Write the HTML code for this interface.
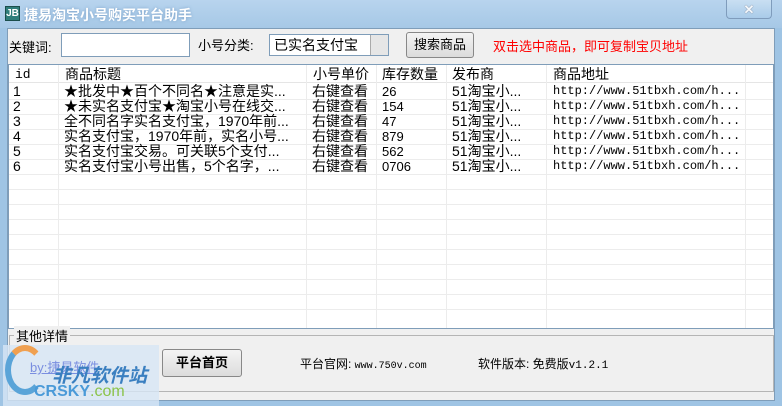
<!DOCTYPE html>
<html><head><meta charset="utf-8"><style>
*{margin:0;padding:0;box-sizing:border-box}
body{width:782px;height:406px;overflow:hidden;background:#9fc4e4;font-family:"Liberation Sans","Noto Sans CJK SC",sans-serif;position:relative}
.a{position:absolute;white-space:nowrap}
#client{left:7px;top:28px;width:768px;height:373px;background:#f0f0f0;border:1px solid #7f9db9}
.cell{position:absolute;font-size:14px;line-height:15px;color:#000;overflow:hidden;white-space:nowrap}
.mono{font-family:"Liberation Mono","Noto Sans CJK SC",monospace;font-size:12px}
.vl{position:absolute;top:0;width:1px;height:263px;background:#ececec}
.hl{position:absolute;left:0;width:764px;height:1px;background:#ececec}
</style></head><body>
<div class="a" style="left:0;top:0;width:782px;height:28px;background:linear-gradient(#b8d4ee,#a6c8e6)"></div>
<div class="a" style="left:5px;top:6px;width:15px;height:15px;background:#2e7d7a;border:1px solid #1b4d4b;color:#fff;font-size:10px;line-height:13px;text-align:center;font-weight:bold">JB</div>
<div class="a" style="left:24px;top:5px;font-size:14px;color:#fff;font-weight:bold;text-shadow:0 0 3px #7aa0c8">捷易淘宝小号购买平台助手</div>
<div class="a" style="left:726px;top:0;width:46px;height:19px;border:1px solid #7f9cbc;border-top:none;border-radius:0 0 4px 4px;background:linear-gradient(#c9dff2,#a9cbe9);color:#f4f8fc;text-align:center;font-size:13px;line-height:19px;font-weight:bold;text-shadow:0 0 1px #556">✕</div>
<div class="a" id="client"></div>
<div class="a" style="left:9px;top:37px;font-size:13px">关键词:</div>
<div class="a" style="left:61px;top:33px;width:129px;height:24px;background:#fff;border:1px solid #7f9db9"></div>
<div class="a" style="left:198px;top:35px;font-size:13px">小号分类:</div>
<div class="a" style="left:269px;top:34px;width:120px;height:22px;background:#fff;border:1px solid #7f9db9;font-size:14px;line-height:20px;padding-left:4px">已实名支付宝</div>
<div class="a" style="left:370px;top:35px;width:18px;height:20px;background:#e6e6e6;border-left:1px solid #aaa"></div>
<div class="a" style="left:406px;top:32px;width:68px;height:26px;border:1px solid #888;border-radius:3px;background:linear-gradient(#f4f4f4,#dcdcdc);font-size:13px;line-height:24px;text-align:center">搜索商品</div>
<div class="a" style="left:493px;top:36px;font-size:13px;color:#f00">双击选中商品，即可复制宝贝地址</div>
<div class="a" style="left:8px;top:64px;width:766px;height:265px;background:#fff;border:1px solid #7f9db9">
 <div class="a" style="left:0;top:0;width:764px;height:18px;background:#fff;border-bottom:1px solid #e5e5e5"></div>
 <div class="vl" style="left:49px"></div><div class="vl" style="left:297px"></div><div class="vl" style="left:367px"></div><div class="vl" style="left:437px"></div><div class="vl" style="left:537px"></div><div class="vl" style="left:736px"></div>
 <div class="hl" style="top:34px"></div><div class="hl" style="top:49px"></div><div class="hl" style="top:64px"></div><div class="hl" style="top:79px"></div><div class="hl" style="top:94px"></div><div class="hl" style="top:109px"></div><div class="hl" style="top:124px"></div><div class="hl" style="top:139px"></div><div class="hl" style="top:154px"></div><div class="hl" style="top:169px"></div><div class="hl" style="top:184px"></div><div class="hl" style="top:199px"></div><div class="hl" style="top:214px"></div><div class="hl" style="top:229px"></div><div class="hl" style="top:244px"></div>
 <div class="cell mono" style="left:6px;top:2px;font-size:13px">id</div>
 <div class="cell" style="left:56px;top:2px">商品标题</div>
 <div class="cell" style="left:304px;top:2px">小号单价</div>
 <div class="cell" style="left:373px;top:2px">库存数量</div>
 <div class="cell" style="left:443px;top:2px">发布商</div>
 <div class="cell" style="left:544px;top:2px">商品地址</div>
</div>
<div class="a" style="left:8px;top:84px;width:766px">
<div style="position:relative;height:90px">
<div class="cell" style="left:5px;top:0">1<br>2<br>3<br>4<br>5<br>6</div>
<div class="cell" style="left:56px;top:0;width:240px">★批发中★百个不同名★注意是实...<br>★未实名支付宝★淘宝小号在线交...<br>全不同名字实名支付宝，1970年前...<br>实名支付宝，1970年前，实名小号...<br>实名支付宝交易。可关联5个支付...<br>实名支付宝小号出售，5个名字，...</div>
<div class="cell" style="left:304px;top:0">右键查看<br>右键查看<br>右键查看<br>右键查看<br>右键查看<br>右键查看</div>
<div class="cell" style="left:374px;top:0;font-size:13px">26<br>154<br>47<br>879<br>562<br>0706</div>
<div class="cell" style="left:444px;top:0">51淘宝小...<br>51淘宝小...<br>51淘宝小...<br>51淘宝小...<br>51淘宝小...<br>51淘宝小...</div>
<div class="cell mono" style="left:545px;top:0">http://www.51tbxh.com/h...<br>http://www.51tbxh.com/h...<br>http://www.51tbxh.com/h...<br>http://www.51tbxh.com/h...<br>http://www.51tbxh.com/h...<br>http://www.51tbxh.com/h...</div>
</div></div>
<div class="a" style="left:9px;top:335px;width:765px;height:57px;border:1px solid #b5b5b5"></div>
<div class="a" style="left:14px;top:326px;background:#f0f0f0;font-size:13px;padding:0 2px">其他详情</div>
<div class="a" style="left:3px;top:345px;width:156px;height:61px;background:rgba(215,230,245,0.8)"></div>
<div class="a" style="left:5px;top:345px;width:40px;height:50px;border-radius:50%;border:6px solid #5aa4d8;border-right-color:transparent;border-top-color:#f0a050"></div>
<div class="a" style="left:30px;top:357px;font-size:13px;color:#7a8ee0;text-decoration:underline">by:捷易软件</div>
<div class="a" style="left:52px;top:361px;font-size:19px;font-weight:bold;font-style:italic;color:#3a7fc0">非凡软件站</div>
<div class="a" style="left:34px;top:383px;font-size:16px;font-weight:bold;color:#4a9ad8">CRSKY<span style="color:#8bc34a;font-weight:normal">.com</span></div>
<div class="a" style="left:162px;top:349px;width:80px;height:28px;border:1px solid #888;border-radius:3px;background:linear-gradient(#f4f4f4,#dcdcdc);font-size:13px;font-weight:bold;line-height:26px;text-align:center">平台首页</div>
<div class="a" style="left:300px;top:355px;font-size:12px">平台官网: <span style="font-family:'Liberation Mono',monospace;font-size:10px">www.750v.com</span></div>
<div class="a" style="left:478px;top:355px;font-size:12px">软件版本: 免费版<span style="font-family:'Liberation Mono',monospace;font-size:11px">v1.2.1</span></div>
</body></html>
